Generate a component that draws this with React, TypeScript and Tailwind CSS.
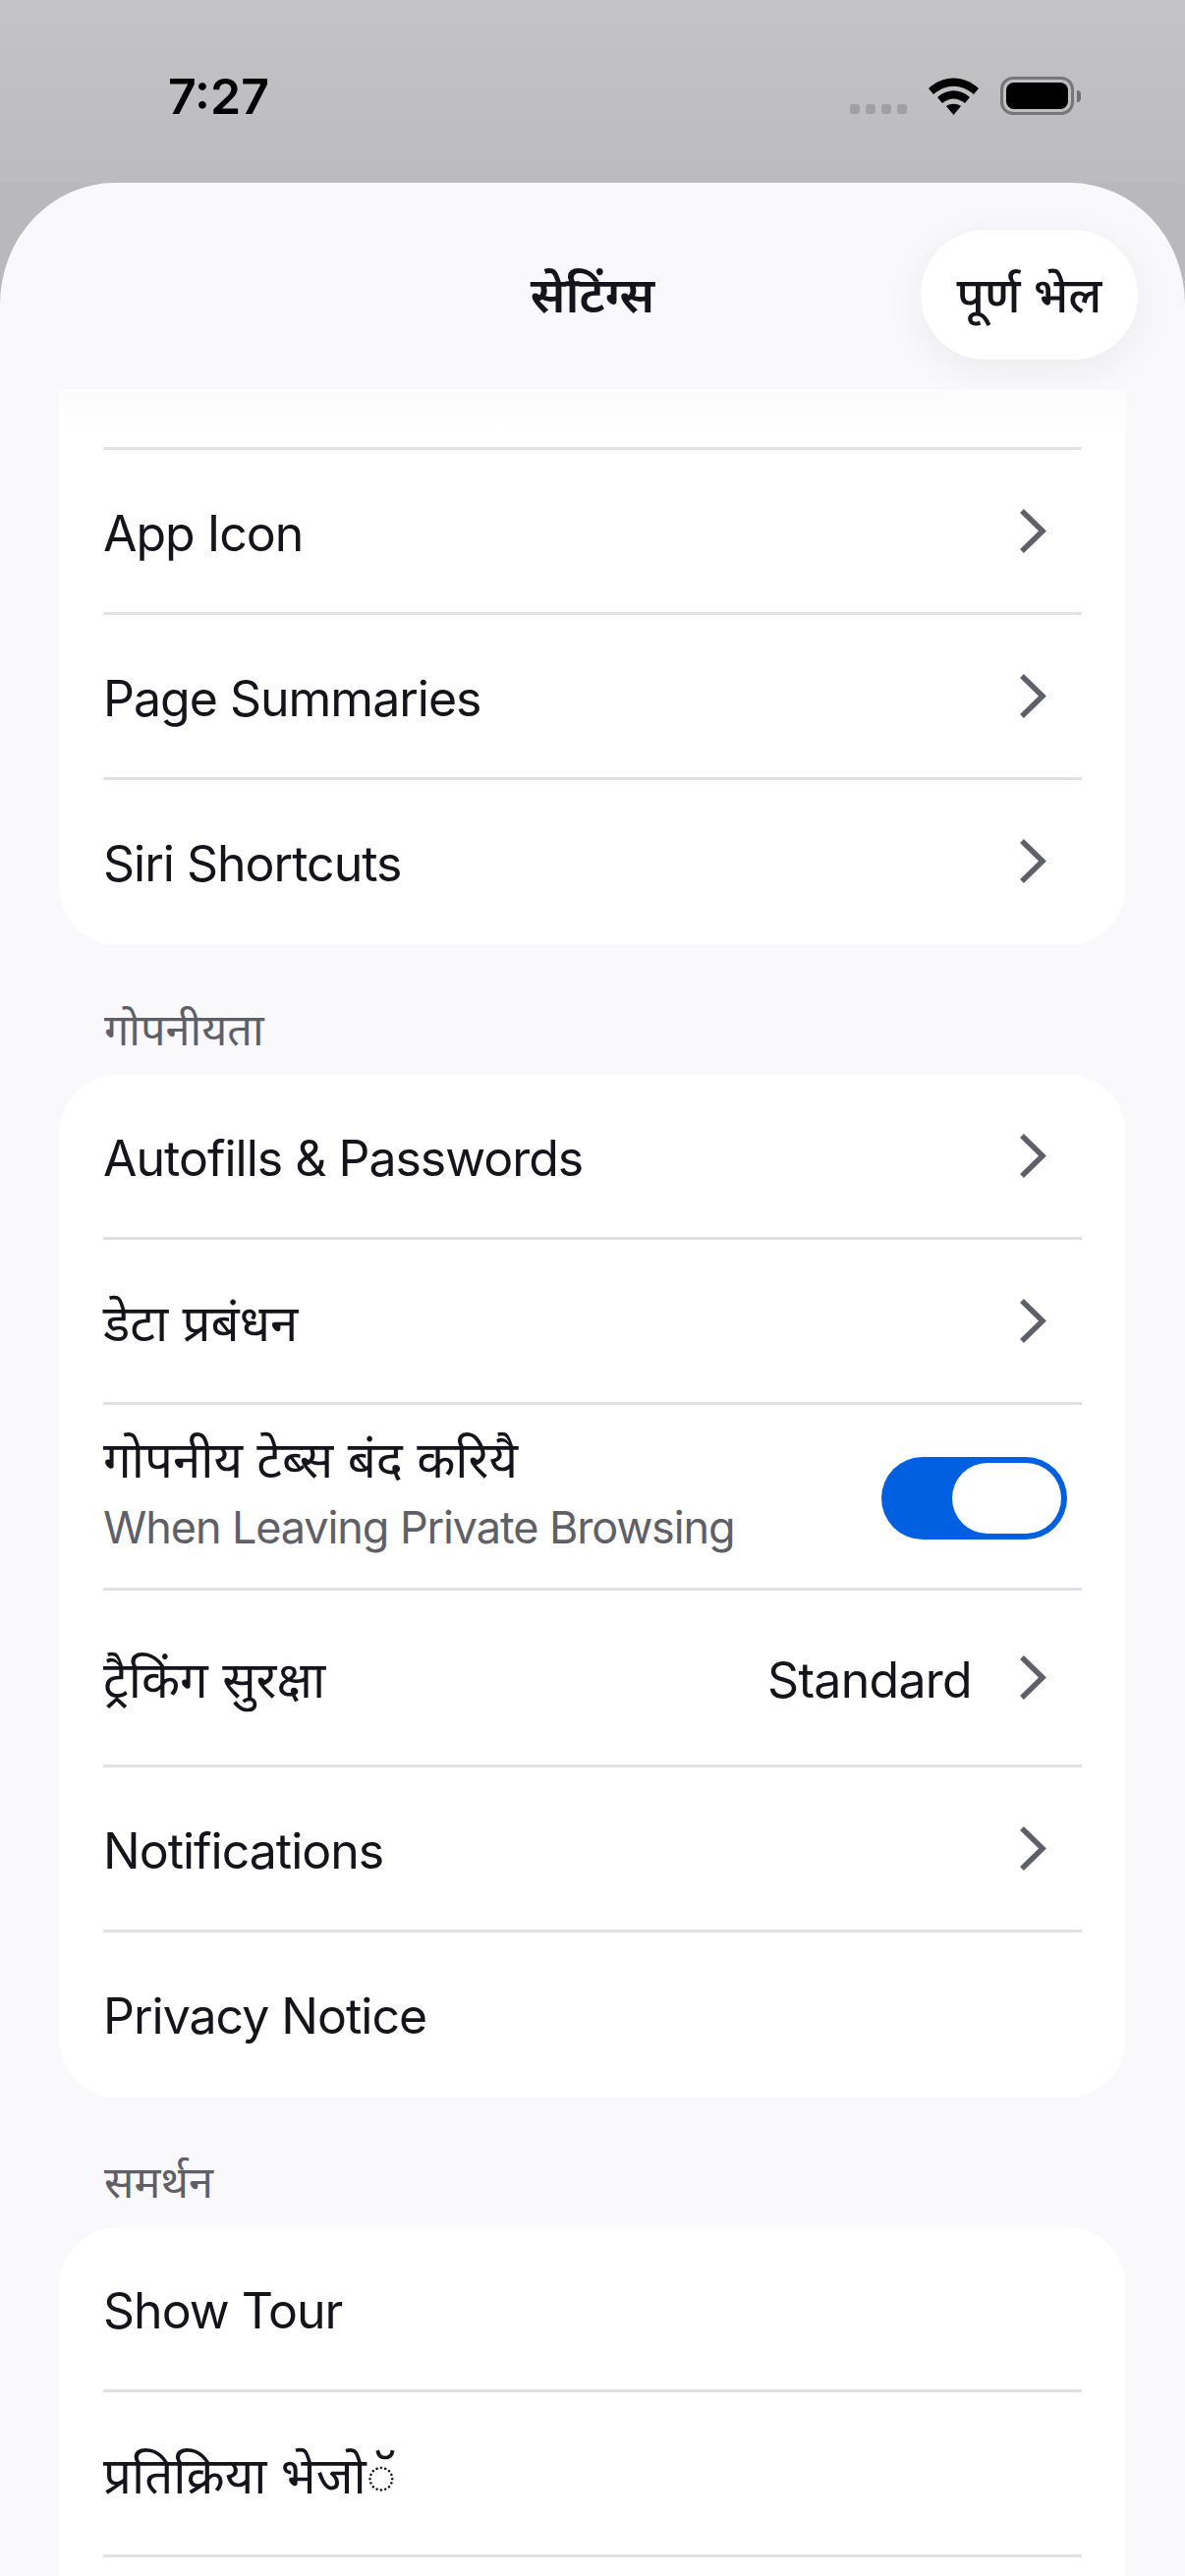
const Chevron = () => (
	<svg width="30" height="48" viewBox="0 0 30 48" fill="none" className="shrink-0 mb-[6px]">
		<path d="M4 3 L25 23.5 L4 44" stroke="#5f5f68" strokeWidth="5.5" />
	</svg>
);

const Divider = () => <div className="mx-[45px] h-[3px] bg-[#e0e0e6]" />;

const Row = ({ label, value, chevron = true, latin = false }: { label: string; value?: string; chevron?: boolean; latin?: boolean }) => (
	<div className="h-[165px] pt-[6px] flex items-center justify-between pl-[45px] pr-[80px] text-[#15141a]">
		<span className={latin ? "text-[50px] tracking-[-1px]" : "text-[51px]"}>{label}</span>
		<div className="flex items-center gap-[47px]">
			{value && <span className="text-[50px] tracking-[-0.7px]">{value}</span>}
			{chevron && <Chevron />}
		</div>
	</div>
);

const Toggle = () => (
	<div className="mt-[4px] w-[189px] h-[84px] rounded-full bg-[#0060df] p-[6px] flex justify-end">
		<div className="w-[111px] h-[72px] rounded-full bg-white" />
	</div>
);

const StatusBar = () => (
	<div className="h-[186px] pl-[171px] pr-[106px] flex items-start justify-between bg-gradient-to-b from-[#c3c3c5] to-[#bcbcbe]">
		<span className="mt-[68px] text-[50px] leading-[60px] font-semibold text-black">7:27</span>
		<div className="mt-[78px] flex items-end">
			<div className="flex gap-[6px] mb-[1px]">
				<div className="w-[10px] h-[10px] rounded-[3px] bg-[#a0a0a2]" />
				<div className="w-[10px] h-[10px] rounded-[3px] bg-[#a0a0a2]" />
				<div className="w-[10px] h-[10px] rounded-[3px] bg-[#a0a0a2]" />
				<div className="w-[10px] h-[10px] rounded-[3px] bg-[#a0a0a2]" />
			</div>
			<svg width="51" height="38" viewBox="0 0 51 38" className="ml-[22px]">
				<path d="M0 11 C15 -3 36 -3 51 11 L46 17 C33 6 18 6 5 17 Z" fill="#000" />
				<path d="M9 20 C19 11 32 11 42 20 L37 26 C29 20 22 20 14 26 Z" fill="#000" />
				<path d="M18 29 C22 26 29 26 33 29 L25.5 38 Z" fill="#000" />
			</svg>
			<div className="ml-[22px] flex items-center">
				<div className="w-[75px] h-[39px] rounded-[13px] border-[3px] border-[#77777a] p-[3px]">
					<div className="w-full h-full rounded-[8px] bg-black" />
				</div>
				<div className="ml-[3px] w-[4px] h-[12px] rounded-r-full bg-[#6f6f72]" />
			</div>
		</div>
	</div>
);

export default function App() {
	return (
		<div className="w-[1206px] h-[2622px] overflow-hidden bg-[#b9b9bb] font-['Inter','Noto_Sans',sans-serif]">
			<StatusBar />
			<div className="h-[2436px] rounded-tl-[117px_124px] rounded-tr-[117px_124px] bg-[#f9f9fb] overflow-hidden">
				<div className="relative h-[210px] flex items-center justify-center">
					<h1 className="pt-[18px] text-[50px] font-semibold text-[#15141a]">सेटिंग्स</h1>
					<button className="absolute left-[937px] top-[48px] w-[221px] h-[132px] pt-[2px] rounded-full bg-white text-[49px] font-medium text-[#15141a] shadow-[0_10px_44px_rgba(0,0,0,0.06)]">
						पूर्ण भेल
					</button>
				</div>

				<div className="relative mx-[60px] bg-white rounded-b-[60px]">
					<div className="h-[59px]" />
					<div className="absolute inset-x-0 top-0 h-[50px] bg-gradient-to-b from-[#fcfcfd] to-white" />
					<Divider />
					<Row latin label="App Icon" />
					<Divider />
					<Row latin label="Page Summaries" />
					<Divider />
					<Row latin label="Siri Shortcuts" />
					<div className="h-[3px]" />
				</div>

				<h2 className="mt-[62px] mb-[22px] mx-[106px] h-[48px] text-[45px] leading-[48px] text-[#5f5f68]">गोपनीयता</h2>
				<div className="mx-[60px] bg-white rounded-[60px]">
					<Row latin label="Autofills & Passwords" />
					<Divider />
					<Row label="डेटा प्रबंधन" />
					<Divider />
					<div className="h-[186px] flex items-center justify-between pl-[45px] pr-[60px]">
						<div className="mb-[10px]">
							<div className="text-[51px] leading-[64px] text-[#15141a]">गोपनीय टेब्स बंद करियै</div>
							<div className="mt-[10px] text-[45px] leading-[54px] tracking-[-1.1px] text-[#5f5f68]">When Leaving Private Browsing</div>
						</div>
						<Toggle />
					</div>
					<Divider />
					<div className="[&>div]:h-[177px]">
						<Row label="ट्रैकिंग सुरक्षा" value="Standard" />
					</div>
					<Divider />
					<Row latin label="Notifications" />
					<Divider />
					<Row latin label="Privacy Notice" chevron={false} />
					<div className="h-[3px]" />
				</div>

				<h2 className="mt-[62px] mb-[22px] mx-[106px] h-[48px] text-[45px] leading-[48px] text-[#5f5f68]">समर्थन</h2>
				<div className="mx-[60px] bg-white rounded-[60px]">
					<Row latin label="Show Tour" chevron={false} />
					<Divider />
					<Row label="प्रतिक्रिया भेजो◌ॅ" chevron={false} />
					<Divider />
					<Row label="" chevron={false} />
				</div>
			</div>
		</div>
	);
}
